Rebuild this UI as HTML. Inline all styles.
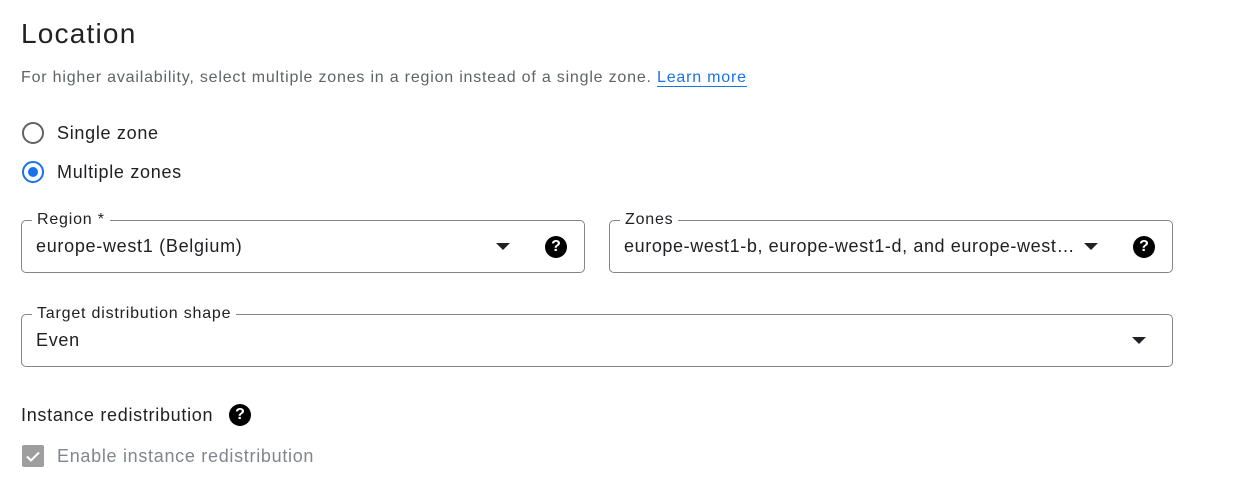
<!DOCTYPE html>
<html><head><style>
body{margin:0;width:1246px;height:504px;background:#fff;font-family:"Liberation Sans",Roboto,sans-serif;color:#202124;position:relative;overflow:hidden}
.a{position:absolute;white-space:nowrap}
.box{position:absolute;border:1px solid #80868b;border-radius:5px;height:51px}
.lbl{position:absolute;top:-11px;left:10px;background:#fff;padding:0 5px;font-size:16px;line-height:20px;color:#202124;letter-spacing:0.8px}
.val{position:absolute;left:14px;top:14px;font-size:18px;line-height:22px;letter-spacing:0.7px;white-space:nowrap}
.arr{position:absolute;width:0;height:0;border-left:7px solid transparent;border-right:7px solid transparent;border-top:7px solid #202124}
.help{position:absolute;width:22px;height:22px;border-radius:50%;background:#000;color:#fff;font-weight:bold;font-size:16px;line-height:22px;text-align:center}
.t18{font-size:18px;line-height:24px;letter-spacing:0.7px}
</style></head><body>
<div class="a" style="left:21px;top:16px;font-size:28px;line-height:36px;letter-spacing:1.2px">Location</div>
<div class="a" style="left:21px;top:68px;font-size:16px;line-height:20px;color:#5f6368;letter-spacing:0.8px">For higher availability, select multiple zones in a region instead of a single zone. <span style="color:#1a73e8;border-bottom:1px solid #1a73e8">Learn more</span></div>
<div class="a" style="left:22px;top:122px;width:18px;height:18px;border:2px solid #5f6368;border-radius:50%"></div>
<div class="a t18" style="left:57px;top:121px">Single zone</div>
<div class="a" style="left:22px;top:161px;width:18px;height:18px;border:2px solid #1a73e8;border-radius:50%"></div>
<div class="a" style="left:28px;top:167px;width:10px;height:10px;background:#1a73e8;border-radius:50%"></div>
<div class="a t18" style="left:57px;top:160px">Multiple zones</div>

<div class="box" style="left:21px;top:220px;width:562px"><div class="lbl">Region *</div><div class="val">europe-west1 (Belgium)</div>
<div class="arr" style="left:474px;top:22px"></div><div class="help" style="left:523px;top:15px">?</div></div>
<div class="box" style="left:609px;top:220px;width:562px"><div class="lbl">Zones</div><div class="val" style="width:456px;overflow:hidden;text-overflow:ellipsis;letter-spacing:0.6px">europe-west1-b, europe-west1-d, and europe-west1-c</div>
<div class="arr" style="left:474px;top:22px"></div><div class="help" style="left:523px;top:15px">?</div></div>
<div class="box" style="left:21px;top:314px;width:1150px"><div class="lbl">Target distribution shape</div><div class="val">Even</div>
<div class="arr" style="left:1110px;top:22px"></div></div>

<div class="a t18" style="left:21px;top:403px">Instance redistribution</div>
<div class="help" style="left:229px;top:404px">?</div>
<div class="a" style="left:22px;top:445px;width:22px;height:22px;background:#9e9e9e;border-radius:2px"><svg width="22" height="22" viewBox="0 0 22 22"><path d="M5 11.5l4 4 8-8" stroke="#fff" stroke-width="2" fill="none"/></svg></div>
<div class="a t18" style="left:57px;top:444px;color:#80868b">Enable instance redistribution</div>
</body></html>
